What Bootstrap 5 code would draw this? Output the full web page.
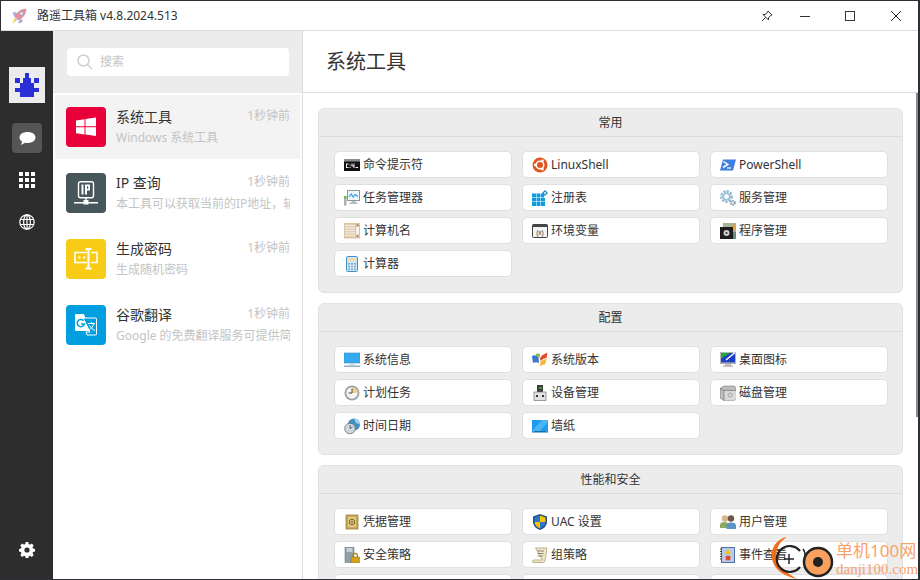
<!DOCTYPE html>
<html lang="zh-CN">
<head>
  <meta charset="UTF-8">
  <title>路遥工具箱</title>
  <meta name="viewport" content="width=device-width, initial-scale=1">
  <link href="https://cdn.jsdelivr.net/npm/bootstrap@5.3.3/dist/css/bootstrap.min.css" rel="stylesheet">
  <script src="https://cdn.jsdelivr.net/npm/bootstrap@5.3.3/dist/js/bootstrap.bundle.min.js"></script>
  <style>
    html, body { height: 100%; overflow: hidden; }
    body {
      font-family: "Noto Sans", "Noto Sans CJK SC", sans-serif;
      font-size: 12px;
      color: #333;
      background: #fff;
    }
    .app-window {
      width: 920px;
      height: 580px;
      border: 1px solid #2b3033;
      border-right-width: 2px;
      position: relative;
      overflow: hidden;
    }
    .title-bar { height: 30px; border-bottom: 1px solid #ddd; flex: none; padding-left: 10px; }
    .title-text { margin-left: 10px; color: #333; line-height: 1; }
    .win-btns svg { display: block; }
    .side-rail { width: 52px; background: #2d2d2d; flex: none; padding-top: 36px; padding-bottom: 21px; }
    .rail-logo { width: 36px; height: 36px; background: #ececec; margin-bottom: 20px; }
    .rail-chat { width: 30px; height: 30px; background: #555; border-radius: 4px; margin-bottom: 12px; }
    .rail-icon { width: 30px; height: 30px; margin-bottom: 12px; }
    .list-pane { width: 250px; flex: none; border-right: 1px solid #ddd; }
    .search-area { height: 62px; background: #ececec; padding: 17px 13px 0 14px; flex: none; }
    .search-box { height: 28px; background: #fff; border-radius: 4px; padding-left: 9px; gap: 6px; color: #c4c4c4; }
    .tool-list { padding: 2px 2px 0 2px; gap: 2px; }
    .tool-item { height: 64px; padding: 12px 10px 0 11px; gap: 10px; }
    .tool-item.is-active { background: #f3f3f3; }
    .tool-logo { width: 40px; height: 40px; border-radius: 4px; flex: none; }
    .tool-name { font-size: 14px; line-height: 20px; color: #333; }
    .tool-time { color: #c4c4c4; line-height: 16px; margin-top: 1px; }
    .tool-desc { color: #c4c4c4; line-height: 16px; margin-top: 3px; white-space: nowrap; overflow: hidden; }
    .tool-info { min-width: 0; flex: 1; }
    .main-pane { min-width: 0; flex: 1; }
    .page-head { height: 62px; border-bottom: 1px solid #ddd; padding-left: 23px; font-size: 20px; flex: none; color: #333; }
    .page-scroll { padding: 15px 0 0 15px; overflow: hidden; flex: 1; position: relative; }
    .tool-group { width: 585px; background: #ececec; border: 1px solid #e2e2e2; border-radius: 6px; margin-bottom: 10px; }
    .tool-group .card-header { height: 28px; padding: 0; background: transparent; border-bottom: 1px solid #dcdcdc; line-height: 27px; text-align: center; font-size: 12px; color: #333; }
    .tool-group .card-body { padding: 14px 14px 15px 15px; }
    .tool-grid { display: grid; grid-template-columns: repeat(3, 178px); gap: 6px 10px; }
    .tool-btn {
      height: 27px;
      padding: 0 0 0 9px;
      background: #fff;
      border: 1px solid #e0e0e0;
      border-radius: 5px;
      font-size: 12px;
      line-height: 1;
      color: #333;
      gap: 3px;
      text-align: left;
    }
    .tool-btn svg { width: 16px; height: 16px; flex: none; }
    .thin-scroll { position: absolute; right: 0; top: 0; width: 2px; height: 324px; background: #8a8a8a; }
    .site-mark { position: absolute; right: 0; bottom: 0; width: 148px; height: 43px; }
    .mark-text { padding-top: 5px; width: 82px; }
    .mark-name { color: #f9a36b; font-size: 17px; line-height: 20px; white-space: nowrap; }
    .mark-url { color: #f9a36b; font-size: 15px; line-height: 16px; white-space: nowrap; font-family: "Liberation Serif", serif; }
  </style>
</head>
<body>
<div class="app-window d-flex flex-column">

  <!-- 标题栏 -->
  <header class="title-bar d-flex align-items-center">
    <svg width="16" height="16" viewBox="0 0 16 16"><path d="M3.500 3.500L7 6 4 9 1.500 5.500Z M9 11L7 15.500 11 14.500 12 12Z" fill="#aeb2d8"/><path d="M3.500 10.500L5.500 12.500 1.500 15.500Z" fill="#f0cf3c"/><path d="M4 8.500C6.500 4 10 1 15 1 15 6 12 9.500 7.500 12Z" fill="#ee8d9c" stroke="#c07a90" stroke-width=".5"/><path d="M4 8.500L7.500 12 6.500 13 3 9.500Z" fill="#c3c6e2"/><circle cx="10.500" cy="5.500" r="1.900" fill="#dfe4f4" stroke="#8f93c2" stroke-width=".7"/></svg>
    <span class="title-text">路遥工具箱 v4.8.2024.513</span>
    <div class="win-btns ms-auto d-flex align-items-center">
      <svg width="12" height="12" viewBox="0 0 12 12" fill="none" stroke="#333" stroke-width="1"><path d="M7 1 L11 5 L9.500 5.500 L7.500 8 L7.500 10 L2 4.500 L4 4.500 L6.500 2.500Z M4.500 7.500 L1 11"/></svg>
      <svg style="margin-left:27px" width="10" height="10" viewBox="0 0 10 10" stroke="#333"><path d="M0 5.500H10"/></svg>
      <svg style="margin-left:35px" width="10" height="10" viewBox="0 0 10 10" fill="none" stroke="#333"><rect x=".5" y=".5" width="9" height="9"/></svg>
      <svg style="margin-left:36px;margin-right:17px" width="10" height="10" viewBox="0 0 10 10" stroke="#333"><path d="M0 0L10 10M10 0L0 10"/></svg>
    </div>
  </header>

  <div class="d-flex flex-grow-1" style="min-height:0">

    <!-- 左侧图标栏 -->
    <nav class="side-rail d-flex flex-column align-items-center">
      <div class="rail-logo d-flex align-items-center justify-content-center">
        <svg width="24" height="24" viewBox="0 0 24 24" fill="#2a2fd6"><path d="M10 0h4v5h-4z M0 5h5v5h-5z M19 5h5v5h-5z M5 10h3v-5h8v5h3v5h5v4h-5v5h-14v-5h-5v-4h5z"/></svg>
      </div>
      <div class="rail-chat d-flex align-items-center justify-content-center">
        <svg width="17" height="15" viewBox="0 0 17 15" fill="#fff"><path d="M8.500 1C13 1 16.500 3.200 16.500 6.500S13 12 8.500 12C7.500 12 6.600 11.900 5.800 11.700 4.800 12.800 3.200 13.500 1.500 13.700 2.500 12.800 3 11.700 3 10.700 1.500 9.700.5 8.200.5 6.500.5 3.200 4 1 8.500 1Z"/></svg>
      </div>
      <div class="rail-icon d-flex align-items-center justify-content-center">
        <svg width="16" height="16" viewBox="0 0 16 16" fill="#fff"><path d="M0 0h4v4H0zM6 0h4v4H6zM12 0h4v4h-4zM0 6h4v4H0zM6 6h4v4H6zM12 6h4v4h-4zM0 12h4v4H0zM6 12h4v4H6zM12 12h4v4h-4z"/></svg>
      </div>
      <div class="rail-icon d-flex align-items-center justify-content-center">
        <svg width="16" height="16" viewBox="0 0 16 16" fill="none" stroke="#fff" stroke-width="1.200"><circle cx="8" cy="8" r="7.200"/><ellipse cx="8" cy="8" rx="3.400" ry="7.200"/><path d="M8 .8V15.200M1 5.500H15M1 10.500H15"/></svg>
      </div>
      <div class="mt-auto">
        <svg class="d-block" width="16" height="16" viewBox="0 0 16 16" fill="#fff"><path fill-rule="evenodd" d="M6.700 0h2.600l.4 2.100 1.300.6 1.800-1.200 1.900 1.900-1.200 1.800.6 1.300 2 .4v2.600l-2 .4-.6 1.300 1.200 1.800-1.900 1.900-1.800-1.200-1.300.6-.4 2.100H6.700l-.4-2.100-1.300-.6-1.800 1.200-1.900-1.900 1.200-1.800-.6-1.300-2-.4V6.900l2-.4.6-1.300L1.300 3.400l1.900-1.900L5 2.700l1.300-.6zM8 5.400a2.600 2.600 0 1 0 0 5.200 2.600 2.600 0 0 0 0-5.200z"/></svg>
      </div>
    </nav>

    <!-- 工具列表 -->
    <aside class="list-pane d-flex flex-column">
      <div class="search-area">
        <div class="search-box d-flex align-items-center">
          <svg width="18" height="18" viewBox="0 0 18 18" fill="none" stroke="#cfcfcf" stroke-width="1.500"><circle cx="7.500" cy="7.500" r="5.500"/><path d="M11.500 11.500L16 16"/></svg>
          <span>搜索</span>
        </div>
      </div>
      <div class="tool-list d-flex flex-column">
        <div class="tool-item is-active d-flex">
          <div class="tool-logo d-flex align-items-center justify-content-center" style="background:#e8003a">
            <svg width="20" height="20" viewBox="0 0 20 20" fill="#fff"><path d="M0 3.500L8.500 2.300V9.300H0zM9.500 2.100L20 .6V9.300H9.500zM0 10.300H8.500V17.400L0 16.200zM9.500 10.300H20V19L9.500 17.600z"/></svg>
          </div>
          <div class="tool-info">
            <div class="d-flex justify-content-between"><span class="tool-name">系统工具</span><span class="tool-time">1秒钟前</span></div>
            <div class="tool-desc">Windows 系统工具</div>
          </div>
        </div>
        <div class="tool-item d-flex">
          <div class="tool-logo d-flex align-items-center justify-content-center" style="background:#46565b">
            <svg width="24" height="24" viewBox="0 0 24 24"><rect x="4.500" y="0.700" width="15" height="16" rx="2" fill="none" stroke="#fff" stroke-width="1.400"/><path d="M7.500 3.500h2v10h-2zM11 3.500h5v6h-3v4h-2zM13 5.200v2.600h1.200V5.200z" fill="#fff" fill-rule="evenodd"/><path d="M0 21h24v1.400H0zM9.500 19h5v4.500h-5zM11.300 16.500h1.400V19h-1.400z" fill="#fff"/></svg>
          </div>
          <div class="tool-info">
            <div class="d-flex justify-content-between"><span class="tool-name">IP 查询</span><span class="tool-time">1秒钟前</span></div>
            <div class="tool-desc">本工具可以获取当前的IP地址，辅助查询地理位置</div>
          </div>
        </div>
        <div class="tool-item d-flex">
          <div class="tool-logo d-flex align-items-center justify-content-center" style="background:#f8cb17">
            <svg width="24" height="22" viewBox="0 0 24 22" fill="none" stroke="#fff" stroke-width="1.600"><path d="M13 4.500H1v10h12M17 4.500H23v10H17"/><path d="M11.500 1h6M14.500 1V20.500M11.500 20.500h6" stroke-width="2"/><path d="M4.500 8.500h2v2h-2zM9 8.500h2v2H9z" fill="#fff" stroke="none"/></svg>
          </div>
          <div class="tool-info">
            <div class="d-flex justify-content-between"><span class="tool-name">生成密码</span><span class="tool-time">1秒钟前</span></div>
            <div class="tool-desc">生成随机密码</div>
          </div>
        </div>
        <div class="tool-item d-flex">
          <div class="tool-logo d-flex align-items-center justify-content-center" style="background:#019fdf">
            <svg width="22" height="22" viewBox="0 0 22 22"><path d="M1 0H9L15 17H1.500A1.500 1.500 0 0 1 0 15.500V1A1 1 0 0 1 1 0Z" fill="#fff"/><path d="M8 4H20.500A1 1 0 0 1 21.500 5V20A1 1 0 0 1 20.500 21H12L11 18H15Z" fill="#019fdf" stroke="#fff" stroke-width="1"/><path d="M8.500 6.800A3.600 3.600 0 1 0 9.300 10H6" fill="none" stroke="#019fdf" stroke-width="1.500"/><path d="M13 9.500H20M16.500 8V9.500M18.700 9.500C18 13 15.500 15.500 13.500 16.500M14.500 11.500C15.500 13.500 17.500 15.500 20 16.500" stroke="#fff" stroke-width="1" fill="none"/></svg>
          </div>
          <div class="tool-info">
            <div class="d-flex justify-content-between"><span class="tool-name">谷歌翻译</span><span class="tool-time">1秒钟前</span></div>
            <div class="tool-desc">Google 的免费翻译服务可提供简体中文和另外</div>
          </div>
        </div>
      </div>
    </aside>

    <!-- 主内容 -->
    <main class="main-pane d-flex flex-column">
      <div class="page-head d-flex align-items-center">系统工具</div>
      <div class="page-scroll">

        <section class="card tool-group">
          <div class="card-header">常用</div>
          <div class="card-body">
            <div class="tool-grid">
              <button class="btn tool-btn d-flex align-items-center"><svg viewBox="0 0 16 16"><rect y="2" width="16" height="12" fill="#111"/><rect y="2" width="16" height="2.500" fill="#8a8f96"/><path d="M2 6.500h2.500v1H3v2.500h1.500v1H2zM5.500 7.500h1v1h-1zM5.500 10h1v1h-1zM7.500 6.500h1v2h1v-2h1v4.500h-1V9.500h-2zM11.500 10h2.500v1h-2.500z" fill="#f2f2f2"/></svg>命令提示符</button>
              <button class="btn tool-btn d-flex align-items-center"><svg viewBox="0 0 16 16"><circle cx="8" cy="8" r="7.500" fill="#e2541e"/><circle cx="8" cy="8" r="3.800" fill="none" stroke="#fff" stroke-width="1.500"/><circle cx="3.300" cy="8" r="1.400" fill="#fff"/><circle cx="10.400" cy="3.900" r="1.400" fill="#fff"/><circle cx="10.400" cy="12.100" r="1.400" fill="#fff"/></svg>LinuxShell</button>
              <button class="btn tool-btn d-flex align-items-center"><svg viewBox="0 0 16 16"><path d="M3 2.500H16L13 13.500H0Z" fill="#3f7fe0"/><path d="M3.500 4.500L7.800 7.500 3 10.500" fill="none" stroke="#fff" stroke-width="1.500"/><path d="M7 11h4" stroke="#fff" stroke-width="1.200"/></svg>PowerShell</button>

              <button class="btn tool-btn d-flex align-items-center"><svg viewBox="0 0 16 16"><rect x="3.500" y=".5" width="12" height="10" fill="#eef6fa" stroke="#8a979e"/><path d="M5 7L7.200 4 9.200 7 11 4.500 14 6.500" fill="none" stroke="#2f9ad8" stroke-width="1.100"/><path d="M7.500 11h4v1.500h2V14H5.500v-1.500h2z" fill="#b3bcc2"/><rect y="6" width="2.500" height="9.500" fill="#a9b0b4"/><rect y="6" width="2.500" height="2.500" fill="#64c145"/></svg>任务管理器</button>
              <button class="btn tool-btn d-flex align-items-center"><svg viewBox="0 0 16 16"><path d="M0 3.500h4v4H0zM4.500 3.500h4v4h-4zM9 3.500h3v4H9zM0 8h4v3.500H0zM4.500 8h4v3.500h-4zM9 8h4v3.500H9zM0 12h4v4H0zM4.500 12h4v4h-4zM9 12h4v4H9z" fill="#0f9be0"/><path d="M13 0L16 3 13 6 10 3Z" fill="#1e8fc8"/><path d="M13 1.800L14.200 3 13 4.200 11.800 3Z" fill="#fff"/></svg>注册表</button>
              <button class="btn tool-btn d-flex align-items-center"><svg viewBox="0 0 16 16"><circle cx="6.500" cy="6.500" r="5" fill="#e7f1f7" stroke="#8fbbd5" stroke-width="2.800" stroke-dasharray="2.200 1.100"/><circle cx="6.500" cy="6.500" r="3" fill="#fff" stroke="#7aa6c2" stroke-width="1"/><circle cx="12.800" cy="12.800" r="2.100" fill="#dbe3e8" stroke="#7f93a1" stroke-width="1.600" stroke-dasharray="1.300 .8"/></svg>服务管理</button>

              <button class="btn tool-btn d-flex align-items-center"><svg viewBox="0 0 16 16"><rect width="16" height="15.500" fill="#dcc3a5"/><path d="M1 2.500H11M1 5H11M1 7.500H11M1 10H11M1 12.500H11" stroke="#f3eadf" stroke-width="1.300"/><rect x="12" y="4" width="3" height="7.500" fill="#f6f1ea"/><path d="M13.500 1L15 3H12ZM13.500 14.500L15 12.500H12Z" fill="#a68660"/></svg>计算机名</button>
              <button class="btn tool-btn d-flex align-items-center"><svg viewBox="0 0 16 16"><rect x=".5" y="1.500" width="15" height="13" rx="1" fill="#f4f4f4" stroke="#444"/><rect x=".5" y="1.500" width="15" height="2.500" fill="#444"/><text x="8" y="11.500" font-size="6.500" text-anchor="middle" fill="#333" font-family="Liberation Sans">(x)</text></svg>环境变量</button>
              <button class="btn tool-btn d-flex align-items-center"><svg viewBox="0 0 16 16"><rect x="3" width="13" height="9" fill="#a5b398"/><rect x="12" y="2" width="4" height="5" fill="#e2a63f"/><rect y="4" width="13" height="12" fill="#1d1d1d"/><circle cx="6.500" cy="10" r="3" fill="#cfcfcf"/><circle cx="6.500" cy="10" r="1" fill="#333"/><rect x="13" y="9" width="3" height="7" fill="#5f8f76"/></svg>程序管理</button>

              <button class="btn tool-btn d-flex align-items-center"><svg viewBox="0 0 16 16"><rect x="2.500" y=".5" width="11" height="15" rx="1" fill="#cfe6f6" stroke="#3f90c8"/><rect x="4" y="2" width="8" height="3" fill="#f2d9a6"/><path d="M4 7h2v1.500H4zM7 7h2v1.500H7zM10 7h2v1.500h-2zM4 9.700h2v1.500H4zM7 9.700h2v1.500H7zM10 9.700h2v1.500h-2zM4 12.400h2v1.500H4zM7 12.400h2v1.500H7zM10 12.400h2v1.500h-2z" fill="#86a9c4"/></svg>计算器</button>
            </div>
          </div>
        </section>

        <section class="card tool-group">
          <div class="card-header">配置</div>
          <div class="card-body">
            <div class="tool-grid">
              <button class="btn tool-btn d-flex align-items-center"><svg viewBox="0 0 16 16"><rect y="1" width="16" height="10" fill="#35aaf2"/><rect y="1" width="16" height="10" fill="none" stroke="#3f8abf" stroke-width=".6"/><path d="M5 11.500h6v1.500H5z" fill="#c9d6de"/><rect y="13.500" width="16" height="1.500" fill="#8fb0c6"/></svg>系统信息</button>
              <button class="btn tool-btn d-flex align-items-center"><svg viewBox="0 0 16 16"><path d="M0 4Q3 2 6.500 5L7 11Q4 9.500 1 11Z" fill="#3b78c9"/><path d="M4 4Q6 4 7.500 6L8 2Q6 1 4 2Z" fill="#8ab84b"/><path d="M8 6Q11 2 15.500 .5L14.500 6Q11 6 8.500 9Z" fill="#e2492a"/><path d="M8.500 9.500Q11 7 14.500 7L13 12.500Q10 12 8 14.500Z" fill="#f2b632"/></svg>系统版本</button>
              <button class="btn tool-btn d-flex align-items-center"><svg viewBox="0 0 16 16"><rect width="16" height="11.500" fill="#ccc" stroke="#888" stroke-width=".6"/><rect x="1" y="1" width="14" height="9.500" fill="#1f3fc4"/><path d="M1 1H10L1 7Z" fill="#21a83a"/><path d="M6 8L15 .5" stroke="#fff" stroke-width="1.400"/><path d="M5 12h6v1.500h2V15H3v-1.500h2z" fill="#bdbdbd"/></svg>桌面图标</button>

              <button class="btn tool-btn d-flex align-items-center"><svg viewBox="0 0 16 16"><circle cx="8" cy="8" r="7.500" fill="#9aa2a8"/><circle cx="8" cy="8" r="5.700" fill="#f7f7f2"/><path d="M8 2.300A5.700 5.700 0 0 1 13.700 8H8Z" fill="#efcf8c"/><path d="M8 3.500V8H4.500" fill="none" stroke="#444" stroke-width="1"/></svg>计划任务</button>
              <button class="btn tool-btn d-flex align-items-center"><svg viewBox="0 0 16 16"><rect x="5" width="6" height="7" fill="#3c3c3c"/><rect x="7.500" y="2" width="2" height="2" fill="#58b947"/><path d="M2 7H14V15.500H2Z" fill="#e2e2e2" stroke="#777" stroke-width=".7"/><path d="M4 10h2v2H4zM10 10h2v2h-2z" fill="#333"/></svg>设备管理</button>
              <button class="btn tool-btn d-flex align-items-center"><svg viewBox="0 0 16 16"><path d="M0 3.500L4 1H14.500L16 3V14L14 15.500H4L0 13Z" fill="#bcbcbc" stroke="#757575" stroke-width=".6"/><path d="M4 5.500H16V14L14 15.500H4Z" fill="#d9d9d9"/><path d="M0 3.500L4 5.500H16M4 5.500V15.500" fill="none" stroke="#666" stroke-width=".6"/><circle cx="10" cy="10" r="2" fill="none" stroke="#999" stroke-width=".8"/></svg>磁盘管理</button>

              <button class="btn tool-btn d-flex align-items-center"><svg viewBox="0 0 16 16"><circle cx="10" cy="6.500" r="6" fill="#3d90c6"/><path d="M10 .5A6 6 0 0 1 16 6.500L12 5Z" fill="#9ed0ec"/><circle cx="6" cy="10.500" r="5.300" fill="#d3d8dc" stroke="#6d777e" stroke-width=".9"/><path d="M6 7V10.500L8.500 9" fill="none" stroke="#444" stroke-width=".8"/></svg>时间日期</button>
              <button class="btn tool-btn d-flex align-items-center"><svg viewBox="0 0 16 16"><rect y="2" width="16" height="11" fill="#1d9bee"/><path d="M0 13L10 2H16V4L8 13Z" fill="#4bb4f4"/><rect y="13" width="16" height="1.500" fill="#0f6fb0"/><path d="M1 13.400h1v.7H1zM14 13.400h1v.7h-1z" fill="#fff"/></svg>墙纸</button>
            </div>
          </div>
        </section>

        <section class="card tool-group">
          <div class="card-header">性能和安全</div>
          <div class="card-body">
            <div class="tool-grid">
              <button class="btn tool-btn d-flex align-items-center"><svg viewBox="0 0 16 16"><rect x="2" y="1" width="12" height="14" fill="#c8a95a" stroke="#8c7430" stroke-width=".7"/><rect x="4" y="3" width="8" height="10" fill="#ddc684"/><circle cx="8" cy="8" r="2.700" fill="none" stroke="#7d6729"/><circle cx="8" cy="8" r=".9" fill="#7d6729"/></svg>凭据管理</button>
              <button class="btn tool-btn d-flex align-items-center"><svg viewBox="0 0 16 16"><path d="M8 0L15 2.500V8Q15 13 8 16 1 13 1 8V2.500Z" fill="#1d4f91"/><path d="M8 1.500V8H2.500V3.500Z" fill="#2f78c8"/><path d="M8 1.500L13.500 3.500V8H8Z" fill="#f5c400"/><path d="M8 8H13.500Q13.300 12 8 14.500Z" fill="#2f78c8"/><path d="M8 8V14.500Q2.800 12 2.500 8Z" fill="#f5c400"/></svg>UAC 设置</button>
              <button class="btn tool-btn d-flex align-items-center"><svg viewBox="0 0 16 16"><circle cx="5" cy="4.500" r="3.200" fill="#d8b48a"/><path d="M0 14V11Q0 8 5 8 8 8 8 11V14Z" fill="#8cab62"/><circle cx="11" cy="4.500" r="3.200" fill="#6d5645"/><path d="M6.500 15V11.500Q6.500 8.500 11 8.500 16 8.500 16 11.500V15Z" fill="#5b94c8"/></svg>用户管理</button>

              <button class="btn tool-btn d-flex align-items-center"><svg viewBox="0 0 16 16"><rect x="1" width="9" height="15.500" fill="#8fa0ad" stroke="#5e6b75" stroke-width=".5"/><path d="M2.500 2H8.500M2.500 4H8.500" stroke="#fff"/><rect x="7" y="10" width="8.500" height="6" fill="#d6a31c" stroke="#8a6a10" stroke-width=".5"/><path d="M9 10V8.500A2.200 2.200 0 0 1 13.400 8.500V10" fill="none" stroke="#a88418" stroke-width="1.200"/></svg>安全策略</button>
              <button class="btn tool-btn d-flex align-items-center"><svg viewBox="0 0 16 16"><path d="M3.500 1H15L13 14Q12.800 15.500 11 15.500H1Q.5 15.500.5 14L1.500 13H10.500Z" fill="#f1e8c9" stroke="#a3946a" stroke-width=".7"/><path d="M5.500 4H12M5.500 6.500H11.500M5.500 9H11" stroke="#77705a" stroke-width=".8"/></svg>组策略</button>
              <button class="btn tool-btn d-flex align-items-center"><svg viewBox="0 0 16 16"><rect x="1.500" y=".5" width="13" height="15" fill="#b9cbe6" stroke="#4f6fa5"/><path d="M0 2h2M0 4.500h2M0 7h2M0 9.500h2M0 12h2" stroke="#444"/><path d="M8 2L11 7H5Z" fill="#f5c400"/><circle cx="8" cy="11" r="2.500" fill="#e2492a"/></svg>事件查看</button>

              <button class="btn tool-btn d-flex align-items-center"></button>
              <button class="btn tool-btn d-flex align-items-center"></button>
              <button class="btn tool-btn d-flex align-items-center"></button>
            </div>
          </div>
        </section>

        <div class="thin-scroll"></div>
      </div>
    </main>
  </div>

  <!-- 水印 -->
  <div class="site-mark d-flex">
    <svg width="66" height="43" viewBox="0 0 66 43" class="flex-none">
      <path d="M17 1C6 3 0 13 2 23 4 33 13 40 27 43 17 37 8 31 6.500 22 5.500 13 9 6 17 1Z" fill="#f26d1a"/>
      <path d="M30 15A13 13 0 1 0 30 31" fill="none" stroke="#222" stroke-width="2.200"/>
      <path d="M14 23H24M19 18V28" stroke="#222" stroke-width="1.500"/>
      <path d="M33 13Q36 17 35 24" fill="none" stroke="#222" stroke-width="1.500"/>
      <circle cx="48" cy="26" r="14" fill="#f9a05f" stroke="#222" stroke-width="2.500"/>
      <circle cx="48" cy="26" r="5" fill="#222"/>
    </svg>
    <div class="mark-text">
      <div class="mark-name">单机100网</div>
      <div class="mark-url">danji100.com</div>
    </div>
  </div>
</div>
</body>
</html>
